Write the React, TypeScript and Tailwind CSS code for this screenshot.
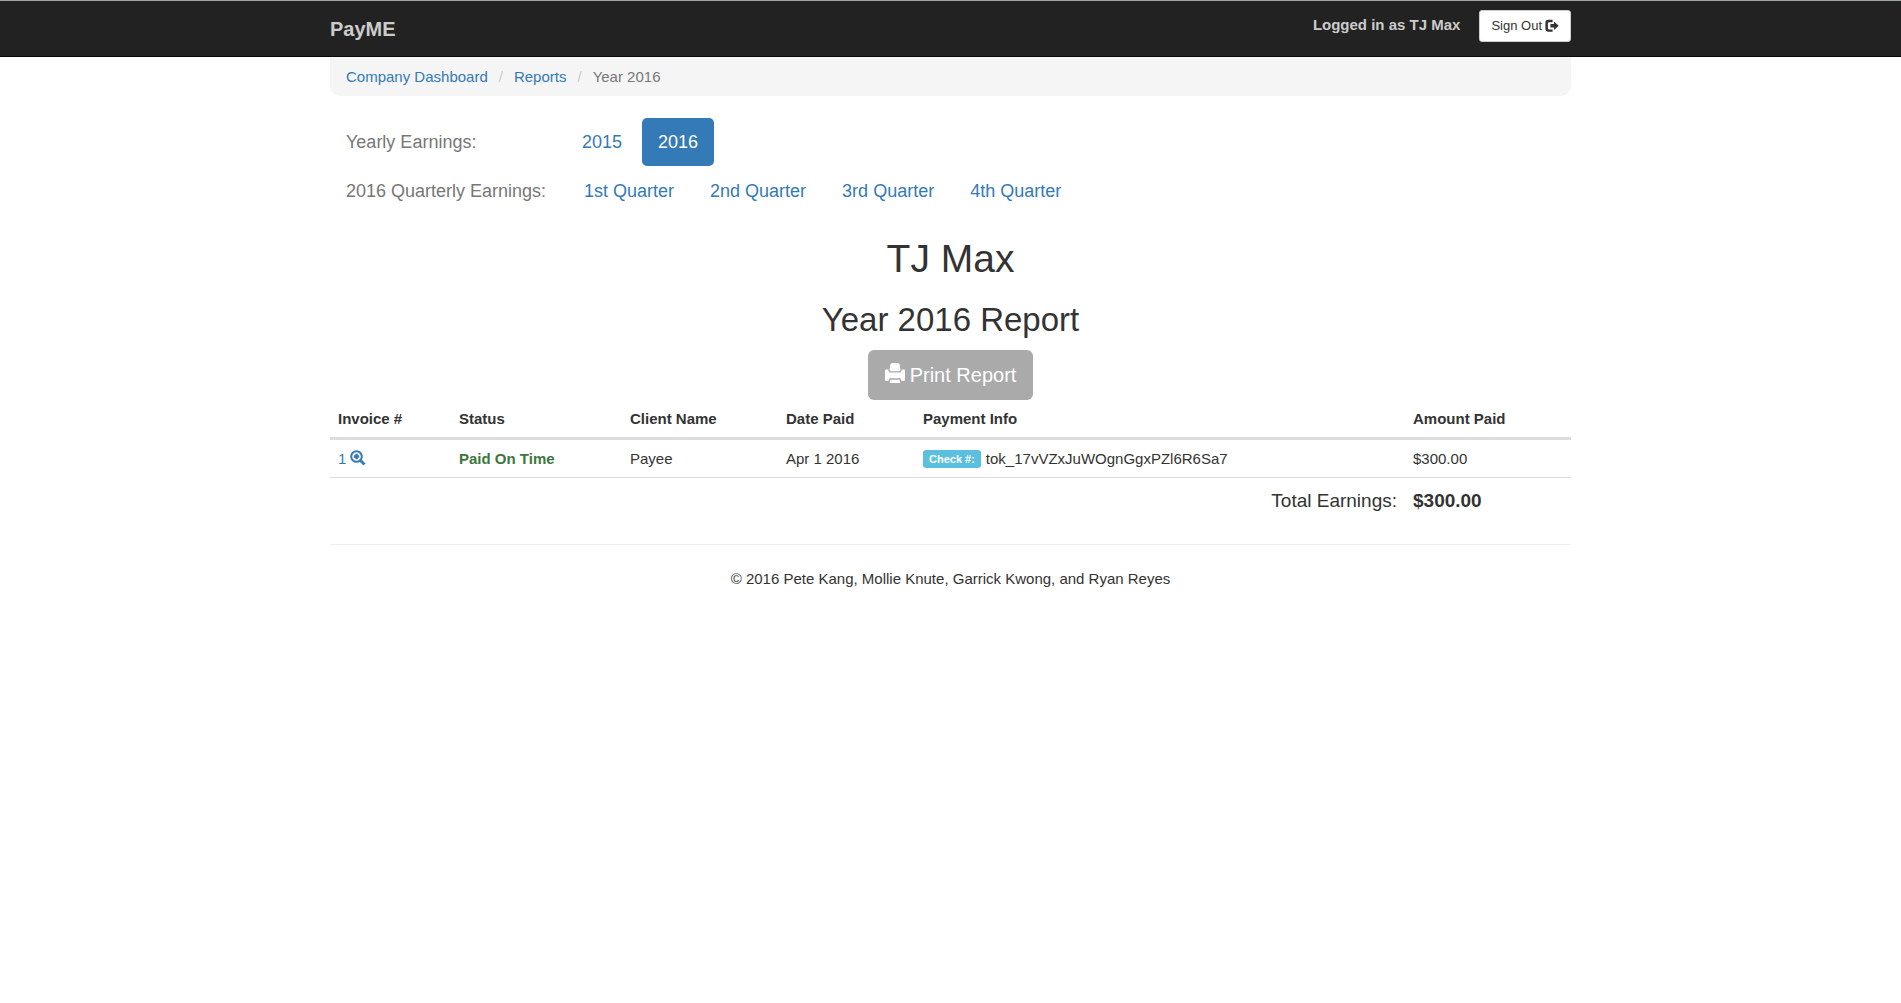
const link = "text-[#337ab7] hover:underline";

function LogOutIcon() {
  return (
    <svg viewBox="0 0 14 14" className="h-3.5 w-3.5" fill="currentColor" aria-hidden="true">
      <path d="M7.6 .8H3.4A3 3 0 0 0 .4 3.800v6a3 3 0 0 0 3 3h4.200v-2.400H4a1.100 1.100 0 0 1-1.100-1.100V4.300A1.100 1.100 0 0 1 4 3.200h3.600z" />
      <path d="M9 2.500 13.700 6.800 9 11.100V8.600H5.400V5H9z" />
    </svg>
  );
}

function PrintIcon() {
  return (
    <svg viewBox="0 0 20 20" className="h-5 w-5" fill="currentColor" aria-hidden="true">
      <path d="M7 0h6l1.500 1 1 5.800-1.200 1.500H5.700L4.500 6.800 5.500 1z" />
      <path d="M1 6.400h2l1.300 3h11.400l1.300-3h2a1 1 0 0 1 1 1V17a1 1 0 0 1-1 1h-2.400l-1.100-2.800h-11L3.400 18H1a1 1 0 0 1-1-1V7.400a1 1 0 0 1 1-1z" />
      <path d="M5.500 16.700h9l1 3.300h-11z" />
    </svg>
  );
}

function ZoomInIcon() {
  return (
    <svg viewBox="0 0 16 16" className="h-4 w-4" aria-hidden="true">
      <circle cx="6.500" cy="6.500" r="5.300" fill="none" stroke="currentColor" strokeWidth="2" />
      <path d="m10.500 10.500 4 4" fill="none" stroke="currentColor" strokeWidth="2.800" />
      <path d="M5.300 3.800h2.400v1.500h1.500v2.400H7.700v1.500H5.300V7.700H3.800V5.300h1.500z" fill="currentColor" />
    </svg>
  );
}

const quarters = ["1st Quarter", "2nd Quarter", "3rd Quarter", "4th Quarter"];

export default function App() {
  return (
    <div className="min-h-screen bg-white text-[15px] leading-[22px] text-[#333] [font-family:'Liberation_Sans',Arial,sans-serif]">
      <header className="border-t border-b border-t-[#a0a5a2] border-b-[#080808] bg-[#222] text-[#ccc]">
        <div className="mx-auto flex h-[55px] max-w-[1241px] items-center justify-between">
          <a href="#" className="text-[20px] font-bold">PayME</a>
          <div className="flex items-center gap-[19px] pb-1.5">
            <p className="pb-0.5 font-bold">Logged in as TJ Max</p>
            <button type="button" className="flex h-8 items-center gap-[3px] rounded-[3px] border border-[#ccc] bg-white px-[11px] text-[13px] text-[#333]">
              Sign Out <LogOutIcon />
            </button>
          </div>
        </div>
      </header>

      <main className="mx-auto max-w-[1241px]">
        <nav aria-label="Breadcrumb" className="rounded-b-[10px] bg-[#f5f5f5] px-4 pt-[9px] pb-2">
          <ol className="flex">
            <li><a href="#" className={link}>Company Dashboard</a></li>
            <li><span className="px-[11px] text-[#ccc]">/</span><a href="#" className={link}>Reports</a></li>
            <li className="text-[#777]"><span className="px-[11px] text-[#ccc]">/</span>Year 2016</li>
          </ol>
        </nav>

        <section className="mt-[22px] pl-4 text-[18px]">
          <div className="flex h-12 items-center">
            <span className="w-[220px] text-[#777]">Yearly Earnings:</span>
            <a href="#" className="mr-1 rounded-[5px] px-4 py-[13px] text-[#337ab7]">2015</a>
            <a href="#" aria-current="page" className="rounded-[5px] bg-[#337ab7] px-4 py-[13px] text-white">2016</a>
          </div>
          <div className="mt-px flex h-12 items-center">
            <span className="w-[222px] text-[#777]">2016 Quarterly Earnings:</span>
            <div className="flex gap-1">
              {quarters.map((q) => (
                <a key={q} href="#" className="px-4 py-[13px] text-[#337ab7]">{q}</a>
              ))}
            </div>
          </div>
        </section>

        <section className="flex flex-col items-center">
          <h1 className="mt-[22px] text-[39px] leading-[43px]">TJ Max</h1>
          <h2 className="mt-[22px] text-[33px] leading-[36px]">Year 2016 Report</h2>
          <button type="button" className="mt-3 flex h-[50px] items-center gap-[5px] rounded-[6px] bg-[#aaa] px-[17px] text-[20px] text-white">
            <span className="pb-1"><PrintIcon /></span> Print Report
          </button>
        </section>

        <table className="w-full table-fixed border-collapse text-left">
          <colgroup>
            <col className="w-[121px]" />
            <col className="w-[171px]" />
            <col className="w-[156px]" />
            <col className="w-[137px]" />
            <col />
            <col className="w-[166px]" />
          </colgroup>
          <thead>
            <tr className="border-b-3 border-[#ddd]">
              <th className="px-2 pt-2 pb-[7px]">Invoice #</th>
              <th className="px-2 pt-2 pb-[7px]">Status</th>
              <th className="px-2 pt-2 pb-[7px]">Client Name</th>
              <th className="px-2 pt-2 pb-[7px]">Date Paid</th>
              <th className="px-2 pt-2 pb-[7px]">Payment Info</th>
              <th className="px-2 pt-2 pb-[7px]">Amount Paid</th>
            </tr>
          </thead>
          <tbody>
            <tr className="border-b border-[#ddd]">
              <td className="px-2 pt-2 pb-[7px]">
                <a href="#" aria-label="View invoice 1" className="flex gap-1 text-[#337ab7]">1 <span className="pt-0.5"><ZoomInIcon /></span></a>
              </td>
              <td className="px-2 pt-2 pb-[7px] font-bold text-[#3c763d]">Paid On Time</td>
              <td className="px-2 pt-2 pb-[7px]">Payee</td>
              <td className="px-2 pt-2 pb-[7px]">Apr 1 2016</td>
              <td className="px-2 pt-2 pb-[7px]">
                <div className="flex items-center gap-[5px]">
                  <span className="rounded-[3px] bg-[#5bc0de] px-1.5 text-[11px] leading-[18px] font-bold text-white">Check #:</span>
                  tok_17vVZxJuWOgnGgxPZl6R6Sa7
                </div>
              </td>
              <td className="px-2 pt-2 pb-[7px]">$300.00</td>
            </tr>
            <tr className="text-[19px]">
              <td colSpan={5} className="px-2 py-3 text-right">Total Earnings:</td>
              <td className="px-2 py-3 font-bold">$300.00</td>
            </tr>
          </tbody>
        </table>

        <footer className="mt-5 border-t border-[#eee] pt-[23px] text-center">
          <p>© 2016 Pete Kang, Mollie Knute, Garrick Kwong, and Ryan Reyes</p>
        </footer>
      </main>
    </div>
  );
}
